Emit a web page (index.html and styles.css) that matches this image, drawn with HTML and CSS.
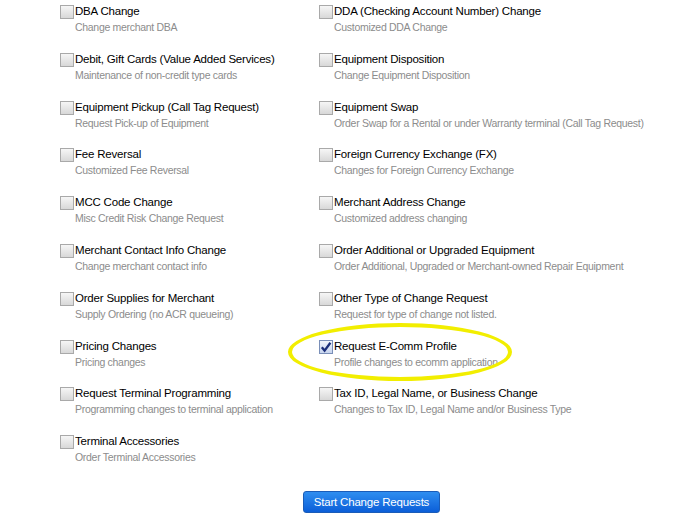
FILE: index.html
```html
<!DOCTYPE html>
<html lang="en">
<head>
    <meta charset="UTF-8">
    <meta name="viewport" content="width=device-width, initial-scale=1.0">
    <title>Change Requests</title>
    <link rel="stylesheet" href="styles.css">
</head>
<body>
    <div class="page">
        <div class="options">
            <label class="option">
                <span class="box"></span>
                <span class="text"><span class="title">DBA Change</span><span class="desc">Change merchant DBA</span></span>
            </label>
            <label class="option">
                <span class="box"></span>
                <span class="text"><span class="title">DDA (Checking Account Number) Change</span><span class="desc">Customized DDA Change</span></span>
            </label>
            <label class="option">
                <span class="box"></span>
                <span class="text"><span class="title">Debit, Gift Cards (Value Added Services)</span><span class="desc">Maintenance of non-credit type cards</span></span>
            </label>
            <label class="option">
                <span class="box"></span>
                <span class="text"><span class="title">Equipment Disposition</span><span class="desc">Change Equipment Disposition</span></span>
            </label>
            <label class="option">
                <span class="box"></span>
                <span class="text"><span class="title">Equipment Pickup (Call Tag Request)</span><span class="desc">Request Pick-up of Equipment</span></span>
            </label>
            <label class="option">
                <span class="box"></span>
                <span class="text"><span class="title">Equipment Swap</span><span class="desc">Order Swap for a Rental or under Warranty terminal (Call Tag Request)</span></span>
            </label>
            <label class="option">
                <span class="box"></span>
                <span class="text"><span class="title">Fee Reversal</span><span class="desc">Customized Fee Reversal</span></span>
            </label>
            <label class="option">
                <span class="box"></span>
                <span class="text"><span class="title">Foreign Currency Exchange (FX)</span><span class="desc">Changes for Foreign Currency Exchange</span></span>
            </label>
            <label class="option">
                <span class="box"></span>
                <span class="text"><span class="title">MCC Code Change</span><span class="desc">Misc Credit Risk Change Request</span></span>
            </label>
            <label class="option">
                <span class="box"></span>
                <span class="text"><span class="title">Merchant Address Change</span><span class="desc">Customized address changing</span></span>
            </label>
            <label class="option">
                <span class="box"></span>
                <span class="text"><span class="title">Merchant Contact Info Change</span><span class="desc">Change merchant contact info</span></span>
            </label>
            <label class="option">
                <span class="box"></span>
                <span class="text"><span class="title">Order Additional or Upgraded Equipment</span><span class="desc">Order Additional, Upgraded or Merchant-owned Repair Equipment</span></span>
            </label>
            <label class="option">
                <span class="box"></span>
                <span class="text"><span class="title">Order Supplies for Merchant</span><span class="desc">Supply Ordering (no ACR queueing)</span></span>
            </label>
            <label class="option">
                <span class="box"></span>
                <span class="text"><span class="title">Other Type of Change Request</span><span class="desc">Request for type of change not listed.</span></span>
            </label>
            <label class="option">
                <span class="box"></span>
                <span class="text"><span class="title">Pricing Changes</span><span class="desc">Pricing changes</span></span>
            </label>
            <label class="option highlighted">
                <span class="box checked">
                    <svg width="12" height="12" viewBox="0 0 12 12"><path d="M1.8 6.2 L4.6 9.6 L10.4 1.8" fill="none" stroke="#1b2f7a" stroke-width="2.3"/></svg>
                </span>
                <span class="text"><span class="title">Request E-Comm Profile</span><span class="desc">Profile changes to ecomm application</span></span>
                <span class="ring"></span>
            </label>
            <label class="option">
                <span class="box"></span>
                <span class="text"><span class="title">Request Terminal Programming</span><span class="desc">Programming changes to terminal application</span></span>
            </label>
            <label class="option">
                <span class="box"></span>
                <span class="text"><span class="title">Tax ID, Legal Name, or Business Change</span><span class="desc">Changes to Tax ID, Legal Name and/or Business Type</span></span>
            </label>
            <label class="option">
                <span class="box"></span>
                <span class="text"><span class="title">Terminal Accessories</span><span class="desc">Order Terminal Accessories</span></span>
            </label>
        </div>
        <div class="actions">
            <button class="start-btn">Start Change Requests</button>
        </div>
    </div>
</body>
</html>
```

FILE: styles.css
```css
body {
    margin: 0;
    background-color: #ffffff;
    font-family: "Liberation Sans", Arial, sans-serif;
    color: #000000;
}
.page {
    padding: 5px 0 0 60px;
}
.options {
    display: grid;
    grid-template-columns: 259px 1fr;
    grid-auto-rows: 47.8px;
}
.option {
    position: relative;
    display: flex;
    align-items: flex-start;
    gap: 1px;
}
.box {
    width: 12px;
    height: 12px;
    border: 1px solid #a9a9a9;
    background: linear-gradient(to bottom, #f6f6f6, #d8d8d8);
    flex-shrink: 0;
    display: flex;
    align-items: center;
    justify-content: center;
}
.box.checked {
    border-color: #7a8fb8;
    background: linear-gradient(to bottom, #f0f4fb, #c8d5ee);
}
.text {
    display: flex;
    flex-direction: column;
}
.title {
    font-size: 11.5px;
    line-height: 12px;
    letter-spacing: -0.2px;
}
.desc {
    font-size: 10.5px;
    line-height: 14px;
    margin-top: 3px;
    letter-spacing: -0.3px;
    color: #8c8c8c;
}
.ring {
    position: absolute;
    left: -31px;
    top: -17px;
    width: 216px;
    height: 50px;
    border: 4px solid #f2ee00;
    border-radius: 50%;
    pointer-events: none;
}
.actions {
    display: flex;
    padding: 8px 0 0 243px;
}
.start-btn {
    width: 137px;
    height: 22px;
    border: 1px solid #1a5cb8;
    border-radius: 3px;
    background: linear-gradient(to bottom, #2f8ef0, #0b5ed8);
    color: #ffffff;
    font-family: "Liberation Sans", Arial, sans-serif;
    font-size: 11.5px;
    letter-spacing: -0.2px;
    padding: 0;
    cursor: pointer;
}
```
